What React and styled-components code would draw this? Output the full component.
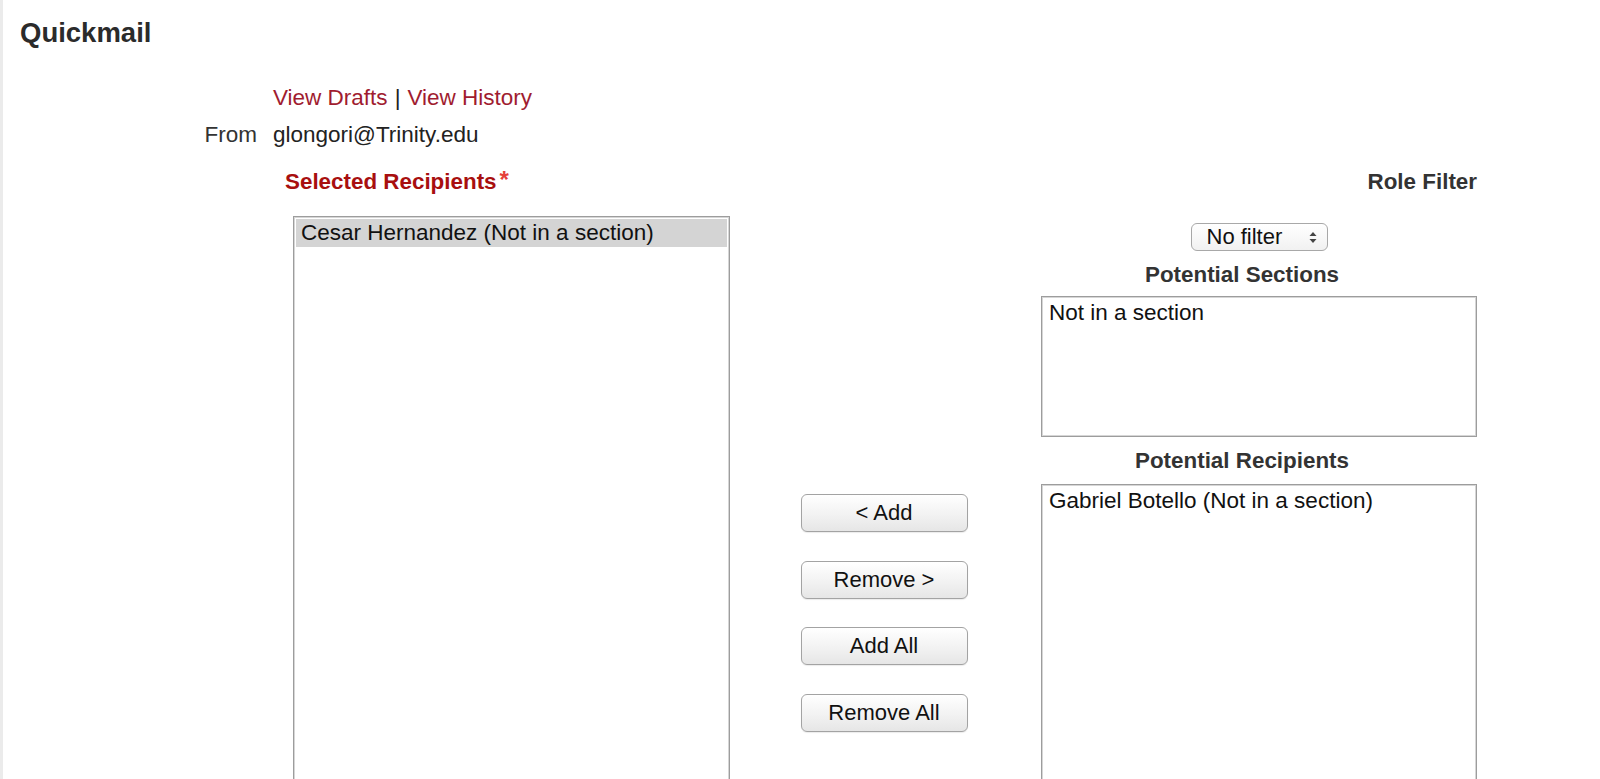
import React from "react";
import styled, { createGlobalStyle } from "styled-components";

const GlobalStyle = createGlobalStyle`
  html, body {
    margin: 0;
    padding: 0;
    overflow: hidden;
    background: #ffffff;
  }
  body {
    font-family: "Liberation Sans", Arial, Helvetica, sans-serif;
    color: #333333;
  }
`;

const Page = styled.div`
  min-height: 779px;
  border-left: 3px solid #ebebeb;
  padding: 17px 0 0 17px;
  box-sizing: border-box;
`;

const Title = styled.h2`
  margin: 0;
  font-size: 27.5px;
  line-height: 32px;
  font-weight: 700;
  color: #2b2b2b;
`;

const FieldRow = styled.div`
  display: grid;
  grid-template-columns: 237px 1fr;
  column-gap: 16px;
  font-size: 22.5px;
  line-height: 28px;
  margin-top: ${(props) => props.top || 0}px;
`;

const Label = styled.div`
  text-align: right;
  color: #333333;
`;

const Value = styled.div`
  color: #222222;
`;

const Link = styled.a`
  color: #a01c30;
  text-decoration: none;
`;

const Sep = styled.span`
  color: #222222;
  margin: 0 7px;
`;

const Picker = styled.div`
  display: grid;
  grid-template-columns: 462px 306px 436px;
  margin: 19px 0 0 253px;
`;

const Heading = styled.div`
  font-size: 22.4px;
  line-height: 28px;
  height: 28px;
  font-weight: 700;
  white-space: nowrap;
  color: ${(props) => props.color || "#333333"};
  text-align: ${(props) => props.align || "left"};
  padding-left: ${(props) => props.indent || 0}px;
  padding-right: ${(props) => props.shift || 0}px;
  margin-top: ${(props) => props.top || 0}px;
`;

const Star = styled.span`
  position: relative;
  top: -1px;
  color: #e5403a;
  font-size: 24px;
  line-height: 0;
  font-weight: 700;
  margin-left: 3px;
`;

const LeftCol = styled.div`
  display: flex;
  flex-direction: column;
`;

const ListBox = styled.div`
  box-sizing: border-box;
  width: ${(props) => props.width}px;
  height: ${(props) => props.height}px;
  margin-left: ${(props) => props.indent || 0}px;
  margin-top: ${(props) => props.top || 0}px;
  border: 1px solid #9d9d9d;
  box-shadow: inset 0 0 0 1px #d6d6d6;
  padding: 2px;
  background: #ffffff;
  font-size: 22.5px;
  color: #111111;
  overflow: hidden;
`;

const Option = styled.div`
  line-height: 28px;
  padding-left: 5px;
  background: ${(props) => (props.selected ? "#d4d4d4" : "transparent")};
`;

const MiddleCol = styled.div`
  display: flex;
  flex-direction: column;
  align-items: center;
  gap: 28.7px;
  padding: 326px 8px 0 0;
`;

const Button = styled.button`
  width: 167px;
  height: 38px;
  border: 1px solid #a3a3a3;
  border-radius: 6px;
  background: linear-gradient(#ffffff, #f2f2f2 55%, #e6e6e6);
  font-family: "Liberation Sans", Arial, sans-serif;
  font-size: 22px;
  color: #111111;
  padding: 0;
  box-shadow: 0 1px 1px rgba(0, 0, 0, 0.08);
`;

const RightCol = styled.div`
  display: flex;
  flex-direction: column;
`;

const SelectBox = styled.div`
  align-self: center;
  box-sizing: border-box;
  width: 137px;
  height: 28px;
  margin-top: 27px;
  border: 1px solid #a8a8a8;
  border-radius: 6px;
  background: linear-gradient(#ffffff, #f1f1f1);
  display: flex;
  align-items: center;
  justify-content: space-between;
  padding: 0 10px 0 15px;
  font-size: 22px;
  color: #111111;
`;

function Arrows() {
  return (
    <svg width="8" height="13" viewBox="0 0 8 13">
      <path d="M4 1 L7.5 5 L0.5 5 Z" fill="#444" />
      <path d="M4 12 L7.5 8 L0.5 8 Z" fill="#444" />
    </svg>
  );
}

export default function App() {
  return (
    <>
      <GlobalStyle />
      <Page>
        <Title>Quickmail</Title>
        <FieldRow top={35}>
          <Label />
          <Value>
            <Link href="#">View Drafts</Link>
            <Sep>|</Sep>
            <Link href="#">View History</Link>
          </Value>
        </FieldRow>
        <FieldRow top={9}>
          <Label>From</Label>
          <Value>glongori@Trinity.edu</Value>
        </FieldRow>
        <Picker>
          <LeftCol>
            <Heading color="#a80f0f" indent={12}>
              Selected Recipients<Star>*</Star>
            </Heading>
            <ListBox width={437} height={640} indent={20} top={20}>
              <Option selected>Cesar Hernandez (Not in a section)</Option>
            </ListBox>
          </LeftCol>
          <MiddleCol>
            <Button>&lt; Add</Button>
            <Button>Remove &gt;</Button>
            <Button>Add All</Button>
            <Button>Remove All</Button>
          </MiddleCol>
          <RightCol>
            <Heading align="right">Role Filter</Heading>
            <SelectBox>
              No filter
              <Arrows />
            </SelectBox>
            <Heading align="center" shift={34} top={10}>
              Potential Sections
            </Heading>
            <ListBox width={436} height={141} top={7}>
              <Option>Not in a section</Option>
            </ListBox>
            <Heading align="center" shift={34} top={10}>
              Potential Recipients
            </Heading>
            <ListBox width={436} height={400} top={9}>
              <Option>Gabriel Botello (Not in a section)</Option>
            </ListBox>
          </RightCol>
        </Picker>
      </Page>
    </>
  );
}
